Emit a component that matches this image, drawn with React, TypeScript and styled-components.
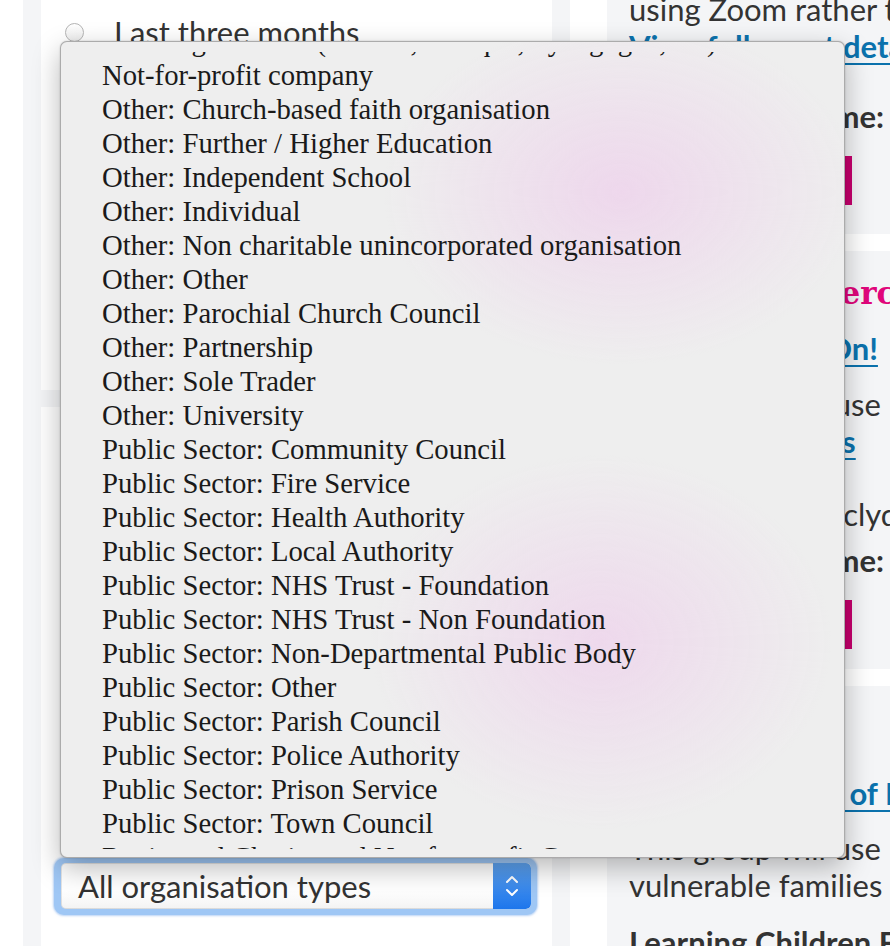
import React from 'react';
import styled, { createGlobalStyle } from 'styled-components';

const Global = createGlobalStyle`
  html, body { margin: 0; padding: 0; background: #ffffff; }
  body { font-family: Lato, "Open Sans", sans-serif; overflow: hidden; }
  * { box-sizing: border-box; }
`;

const Page = styled.div`
  position: relative;
  width: 890px;
  height: 946px;
  overflow: hidden;
  padding-left: 23px;
`;

const Shell = styled.div`
  height: 100%;
  background: #f4f5f7;
  padding-left: 18px;
  display: grid;
  grid-template-columns: 511px 340px;
  column-gap: 18px;
  align-items: start;
`;

const LeftCol = styled.div`
  display: flex;
  flex-direction: column;
  gap: 17px;
`;

const Card = styled.div<{ $h: number }>`
  background: #ffffff;
  height: ${(p) => p.$h}px;
  padding: 0 13px;
  display: flex;
  flex-direction: column;
`;

const RadioRow = styled.label<{ $mt?: number }>`
  display: flex;
  align-items: center;
  gap: 30px;
  height: 40px;
  margin-top: ${(p) => p.$mt ?? 0}px;
  padding-left: 11px;
  font-size: 31px;
  color: #333;
`;

const Radio = styled.span`
  width: 19px;
  height: 19px;
  border-radius: 50%;
  border: 1px solid #b5b5b5;
  background: linear-gradient(#ffffff, #ececec);
  flex: none;
`;

const FieldLabel = styled.div`
  margin-top: 330px;
  padding-left: 24px;
  font-size: 31px;
  font-weight: 700;
  color: #333;
`;

const SelectRing = styled.div`
  margin-top: 83px;
  width: 483px;
  padding: 5px 6px 6px 7px;
  border-radius: 10px;
  background: #9fc7f5;
  box-shadow: 0 0 2px 1px rgba(120, 170, 235, 0.5);
`;

const SelectBox = styled.div`
  height: 46px;
  border-radius: 5px;
  background: linear-gradient(#ffffff 60%, #f3f3f3);
  box-shadow: inset 0 0 0 1px rgba(0, 0, 0, 0.1);
  display: flex;
  align-items: center;
  overflow: hidden;
`;

const SelectText = styled.span`
  flex: 1;
  padding-left: 17px;
  font-size: 31px;
  color: #333;
`;

const Stepper = styled.span`
  width: 38px;
  height: 100%;
  border-radius: 0 5px 5px 0;
  background: linear-gradient(#5ea2ee, #1d76ec);
  display: flex;
  align-items: center;
  justify-content: center;
`;

const RightCard = styled.div`
  background: #ffffff;
  height: 946px;
  padding-left: 37px;
  display: flex;
  flex-direction: column;
  gap: 17px;
`;

const Item = styled.div<{ $h: number; $pt: number }>`
  background: #f4f5f7;
  height: ${(p) => p.$h}px;
  padding: ${(p) => p.$pt}px 0 0 22px;
  display: flex;
  flex-direction: column;
  white-space: nowrap;
`;

const Line = styled.div<{ $mt?: number }>`
  font-size: 31px;
  line-height: 37px;
  color: #333;
  margin-top: ${(p) => p.$mt ?? 0}px;
`;

const Strong = styled(Line)`
  font-weight: 700;
  display: flex;
  align-items: center;
  gap: 22px;
`;

const LinkLine = styled(Line)`
  font-weight: 700;
  color: #0b72ad;
  text-decoration: underline;
  text-decoration-thickness: 2px;
  text-underline-offset: 5px;
`;

const Heading = styled.div<{ $mt?: number }>`
  font-family: "DejaVu Serif", "Liberation Serif", serif;
  font-weight: 700;
  font-size: 31px;
  line-height: 37px;
  color: #e0067b;
  margin-top: ${(p) => p.$mt ?? 0}px;
`;

const PinkButton = styled.div<{ $mt: number }>`
  margin-top: ${(p) => p.$mt}px;
  width: 223px;
  height: 49px;
  background: #c8006e;
`;

const Popup = styled.div`
  position: absolute;
  left: 60px;
  top: 41px;
  width: 785px;
  height: 817px;
  padding: 10px 0 8px;
  border-radius: 7px;
  border: 1px solid rgba(0, 0, 0, 0.28);
  box-shadow: 0 10px 28px rgba(0, 0, 0, 0.28), 0 0 2px rgba(0, 0, 0, 0.2);
  background:
    radial-gradient(ellipse 330px 240px at 560px 150px, rgba(238, 214, 236, 0.95), rgba(238, 214, 236, 0) 72%),
    radial-gradient(ellipse 320px 260px at 540px 600px, rgba(238, 214, 236, 0.9), rgba(238, 214, 236, 0) 72%),
    #eeeeee;
  display: flex;
  flex-direction: column;
`;

const Viewport = styled.div`
  flex: 1;
  overflow: hidden;
`;

const OptionList = styled.ul`
  list-style: none;
  margin: -28px 0 0;
  padding: 0;
`;

const Option = styled.li`
  height: 34px;
  line-height: 34px;
  padding-left: 41px;
  font-family: "Liberation Serif", "Times New Roman", serif;
  font-size: 28.7px;
  color: #1a1a1a;
  white-space: nowrap;
`;

const options = [
  'Faith organisation (Church, Mosque, Synagogue, etc)',
  'Not-for-profit company',
  'Other: Church-based faith organisation',
  'Other: Further / Higher Education',
  'Other: Independent School',
  'Other: Individual',
  'Other: Non charitable unincorporated organisation',
  'Other: Other',
  'Other: Parochial Church Council',
  'Other: Partnership',
  'Other: Sole Trader',
  'Other: University',
  'Public Sector: Community Council',
  'Public Sector: Fire Service',
  'Public Sector: Health Authority',
  'Public Sector: Local Authority',
  'Public Sector: NHS Trust - Foundation',
  'Public Sector: NHS Trust - Non Foundation',
  'Public Sector: Non-Departmental Public Body',
  'Public Sector: Other',
  'Public Sector: Parish Council',
  'Public Sector: Police Authority',
  'Public Sector: Prison Service',
  'Public Sector: Town Council',
  'Registered Charity and Not-for-profit Company',
];

const Chevrons = () => (
  <svg width="16" height="30" viewBox="0 0 16 30" fill="none" stroke="#ffffff" strokeWidth="2" strokeLinecap="round" strokeLinejoin="round">
    <path d="M3 11 L8 6 L13 11" />
    <path d="M3 19 L8 24 L13 19" />
  </svg>
);

const Clock = () => (
  <svg width="30" height="30" viewBox="0 0 24 24" fill="none" stroke="#333" strokeWidth="2">
    <circle cx="12" cy="12" r="9" />
    <path d="M12 7v5l3 3" />
  </svg>
);

export default function App() {
  return (
    <Page>
      <Global />
      <Shell>
        <LeftCol>
          <Card $h={390}>
            <RadioRow $mt={12}>
              <Radio />
              Last three months
            </RadioRow>
            <RadioRow>
              <Radio />
              Last six months
            </RadioRow>
            <RadioRow>
              <Radio />
              Last year
            </RadioRow>
          </Card>
          <Card $h={600}>
            <FieldLabel>Organisation type</FieldLabel>
            <SelectRing>
              <SelectBox>
                <SelectText>All organisation types</SelectText>
                <Stepper>
                  <Chevrons />
                </Stepper>
              </SelectBox>
            </SelectRing>
          </Card>
        </LeftCol>
        <RightCard>
          <Item $h={238} $pt={0}>
            <Line $mt={-9}>using Zoom rather than face to face.</Line>
            <LinkLine>View full event details</LinkLine>
            <Strong $mt={33}>
              <Clock />
              Date and time:
            </Strong>
            <PinkButton $mt={21} />
          </Item>
          <Item $h={425} $pt={24}>
            <Heading>Families Inverclyde</Heading>
            <LinkLine $mt={18}>Get Set &amp; Get On!</LinkLine>
            <Line $mt={19}>This group will use</Line>
            <LinkLine>All Event Details</LinkLine>
            <Line $mt={36}>Greenock, Inverclyde</Line>
            <Strong $mt={9}>
              <Clock />
              Date and time:
            </Strong>
            <PinkButton $mt={21} />
          </Item>
          <Item $h={260} $pt={30}>
            <Heading>Play Group</Heading>
            <LinkLine $mt={22}>Parenting Team of Inverclyde</LinkLine>
            <Line $mt={18}>This group will use</Line>
            <Line>vulnerable families</Line>
            <Strong $mt={20}>Learning Children First</Strong>
          </Item>
        </RightCard>
      </Shell>
      <Popup>
        <Viewport>
          <OptionList>
            {options.map((o) => (
              <Option key={o}>{o}</Option>
            ))}
          </OptionList>
        </Viewport>
      </Popup>
    </Page>
  );
}
